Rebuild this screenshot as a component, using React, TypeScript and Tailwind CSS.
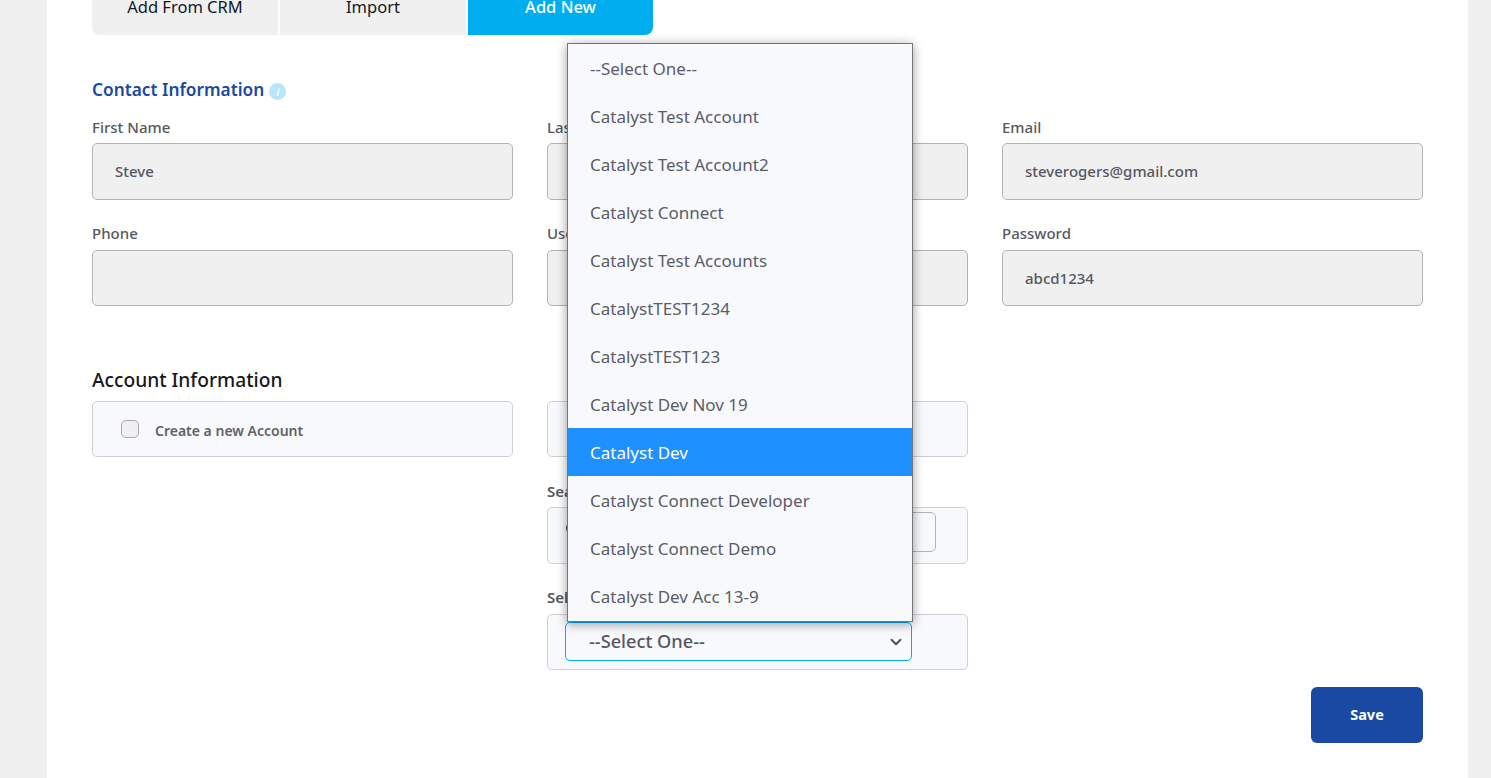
import React from 'react';
import { ChevronDown, Search } from 'lucide-react';

const accountOptions = [
  '--Select One--',
  'Catalyst Test Account',
  'Catalyst Test Account2',
  'Catalyst Connect',
  'Catalyst Test Accounts',
  'CatalystTEST1234',
  'CatalystTEST123',
  'Catalyst Dev Nov 19',
  'Catalyst Dev',
  'Catalyst Connect Developer',
  'Catalyst Connect Demo',
  'Catalyst Dev Acc 13-9',
];

const Field = ({ label, value, top, box }: { label: string; value?: string; top: string; box: string }) => (
  <div className={top}>
    <label className="block text-[15px] leading-[20px] font-medium text-[#55585f]">{label}</label>
    <div className={`mt-[6px] rounded-[5px] border border-[#b3b3b3] bg-[#f0f0f0] pl-[22px] flex items-center text-[15px] font-medium text-[#55585f] ${box}`}>
      {value}
    </div>
  </div>
);

export default function App() {
  return (
    <div className="h-screen overflow-hidden bg-[#f0f0f0] pl-[47px] pr-[23px] font-['Noto_Sans','Open_Sans',sans-serif]">
      <div className="h-full overflow-hidden bg-white px-[45px]">
        {/* tabs */}
        <div className="-mt-[21px] flex gap-[2px] text-[16.5px] text-[#111827]">
          <div className="w-[186px] h-[56px] rounded-bl-[8px] bg-[#f0f0f0] flex items-center justify-center">Add From CRM</div>
          <div className="w-[186px] h-[56px] bg-[#f0f0f0] flex items-center justify-center">Import</div>
          <div className="w-[185px] h-[56px] rounded-br-[8px] bg-[#00aeef] font-medium text-white flex items-center justify-center">Add New</div>
        </div>

        {/* contact */}
        <h2 className="mt-[41px] flex items-center gap-[5px] text-[17.3px] leading-[28px] font-semibold text-[#1a49a3]">
          Contact Information
          <span className="mt-[2px] flex h-[17px] w-[17px] items-center justify-center rounded-full bg-[#b5e6fb]">
            <span className="text-[11px] italic leading-none text-white">i</span>
          </span>
        </h2>
        <div className="mt-[13px] grid grid-cols-3 gap-x-[34px]">
          <Field label="First Name" value="Steve" top="" box="h-[57px]" />
          <Field label="Last Name" value="Rogers" top="" box="h-[57px]" />
          <Field label="Email" value="steverogers@gmail.com" top="" box="h-[57px]" />
          <Field label="Phone" top="mt-[23px]" box="mt-[7px] h-[56px]" />
          <Field label="Username" value="steve" top="mt-[23px]" box="mt-[7px] h-[56px]" />
          <Field label="Password" value="abcd1234" top="mt-[23px]" box="mt-[7px] h-[56px]" />
        </div>

        {/* account */}
        <h2 className="mt-[60px] text-[19.2px] leading-[28px] font-medium text-[#16181d]">Account Information</h2>
        <div className="mt-[7px] grid grid-cols-3 gap-x-[34px]">
          <div className="h-[56px] rounded-[5px] border border-[#d0d0d0] bg-[#f8f9fc] pl-[28px] flex items-center gap-[16px]">
            <span className="h-[18px] w-[18px] rounded-[5px] border border-[#a8a8a8] bg-[#f0f0f0]" />
            <span className="pt-[2px] text-[14px] font-semibold text-[#5f6169]">Create a new Account</span>
          </div>
          <div className="flex flex-col">
            <div className="h-[56px] rounded-[5px] border border-[#d0d0d0] bg-[#f8f9fc] pl-[28px] flex items-center text-[14px] font-semibold text-[#5f6169]">
              Select an existing Account
            </div>
            <label className="mt-[24px] text-[15px] leading-[20px] font-semibold text-[#55585f]">Search Account</label>
            <div className="mt-[6px] h-[57px] rounded-[5px] border border-[#d0d0d0] bg-[#f8f9fc] pl-[17px] pr-[31px] pt-[4px] flex items-start gap-[8px]">
              <Search size={18} strokeWidth={3} className="mt-[8px] shrink-0 text-[#333]" />
              <div className="h-[40px] flex-1 rounded-[5px] border border-[#b3b3b3] bg-[#f8f9fc]" />
            </div>
            <label className="mt-[23px] text-[15px] leading-[20px] font-semibold text-[#55585f]">Select Account</label>
            <div className="mt-[7px] h-[56px] rounded-[5px] border border-[#d0d0d0] bg-[#f8f9fc] pl-[17px] pr-[55px] flex items-center">
              <div className="relative mt-[-1px] h-[39px] w-full rounded-[5px] border border-[#00aeef] bg-[#f8f9fc] pl-[23px] pr-[6px] flex items-center justify-between text-[18.2px] font-medium text-[#55585f]">
                --Select One--
                <ChevronDown size={18} strokeWidth={2.5} className="text-[#4b4f56]" />
                {/* open list */}
                <ul className="absolute left-[1px] bottom-[38px] w-[346px] border border-[#767676] bg-[#f8f9fc] shadow-[0_2px_10px_rgba(0,0,0,0.4)] pb-[1px] text-[17px] font-normal text-[#5a5d66]">
                  {accountOptions.map((opt) => (
                    <li
                      key={opt}
                      className={`h-[48px] pl-[22px] pt-[2px] flex items-center ${opt === 'Catalyst Dev' ? 'bg-[#1e90ff] text-white' : ''}`}
                    >
                      {opt}
                    </li>
                  ))}
                </ul>
              </div>
            </div>
          </div>
        </div>

        <div className="mt-[17px] flex justify-end">
          <button className="h-[56px] w-[112px] rounded-[6px] bg-[#1a49a3] text-[14.5px] font-bold text-white">Save</button>
        </div>
      </div>
    </div>
  );
}
